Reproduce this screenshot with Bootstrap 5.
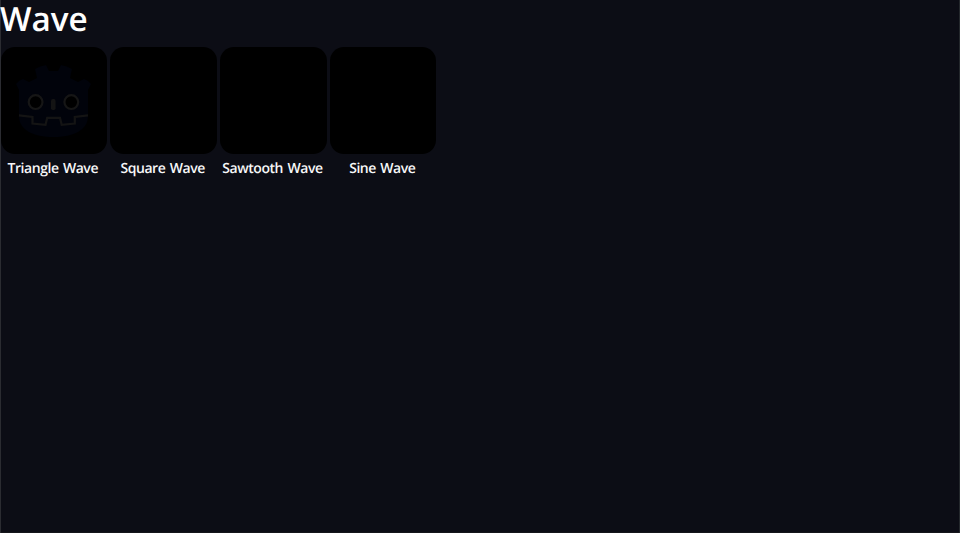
<!DOCTYPE html>
<html lang="en">
<head>
<meta charset="utf-8">
<meta name="viewport" content="width=device-width, initial-scale=1">
<title>Wave</title>
<link href="https://cdn.jsdelivr.net/npm/bootstrap@5.3.0/dist/css/bootstrap.min.css" rel="stylesheet">
<style>
  body { background: #0c0d15; color: #fff; font-family: "Open Sans", sans-serif; font-weight: 600; text-rendering: geometricPrecision; }
  .panel { box-shadow: inset 1px 0 #2b2c31, inset -1px 0 #24282c, inset 0 -1px #15161b; }
  .page-title { font-size: 33.3px; line-height: 38px; height: 47.4px; font-weight: 600; }
  .page-title span { display: block; height: 46px; line-height: 37px; }
  .wave-list { gap: 3.45px; padding-left: .6px; }
  .wave-item { width: 106.4px; }
  .tile { height: 106.5px; border-radius: 14px; background: #000; }
  .wave-name { font-size: 14px; letter-spacing: -.45px; word-spacing: 1.2px; line-height: 20px; margin-top: 5.3px; margin-left: -2px; white-space: nowrap; color: #f7f7f8; }
</style>
<script src="https://cdn.jsdelivr.net/npm/bootstrap@5.3.0/dist/js/bootstrap.bundle.min.js"></script>
</head>
<body>
<main class="panel vh-100">
  <h1 class="page-title mb-0"><span>Wave</span></h1>
  <div class="wave-list d-flex">
    <div class="wave-item text-center">
      <div class="tile">
        <svg class="d-block" width="106" height="106" viewBox="1 46.9 106 106" aria-hidden="true">
          <path fill="#01030b" d="M19 116V90L16 84Q19 80 23 79L29 82L37 78L35 69Q40 66 46 65L49 71H58L61 65Q67 66 72 69L70 78L78 82L84 79Q88 80 91 84L88 90V116C88 130 74 137 53.500 137S19 130 19 116Z"/>
          <g fill="#000" stroke="#161616" stroke-width="2.200">
            <circle cx="35.600" cy="102" r="6.900"/>
            <circle cx="71.300" cy="102" r="6.900"/>
          </g>
          <rect x="51" y="99" width="4.600" height="11" rx="1.800" fill="#141414"/>
          <path fill="none" stroke="#141414" stroke-width="2.200" d="M19 115.300L32.500 116.800V123.500L45.500 124.700L47.200 117.700H60L61.700 124.700L74.800 123.500V116.800L88 115.300"/>
        </svg>
      </div>
      <div class="wave-name">Triangle Wave</div>
    </div>
    <div class="wave-item text-center"><div class="tile"></div><div class="wave-name">Square Wave</div></div>
    <div class="wave-item text-center"><div class="tile"></div><div class="wave-name">Sawtooth Wave</div></div>
    <div class="wave-item text-center"><div class="tile"></div><div class="wave-name">Sine Wave</div></div>
  </div>
</main>
</body>
</html>
